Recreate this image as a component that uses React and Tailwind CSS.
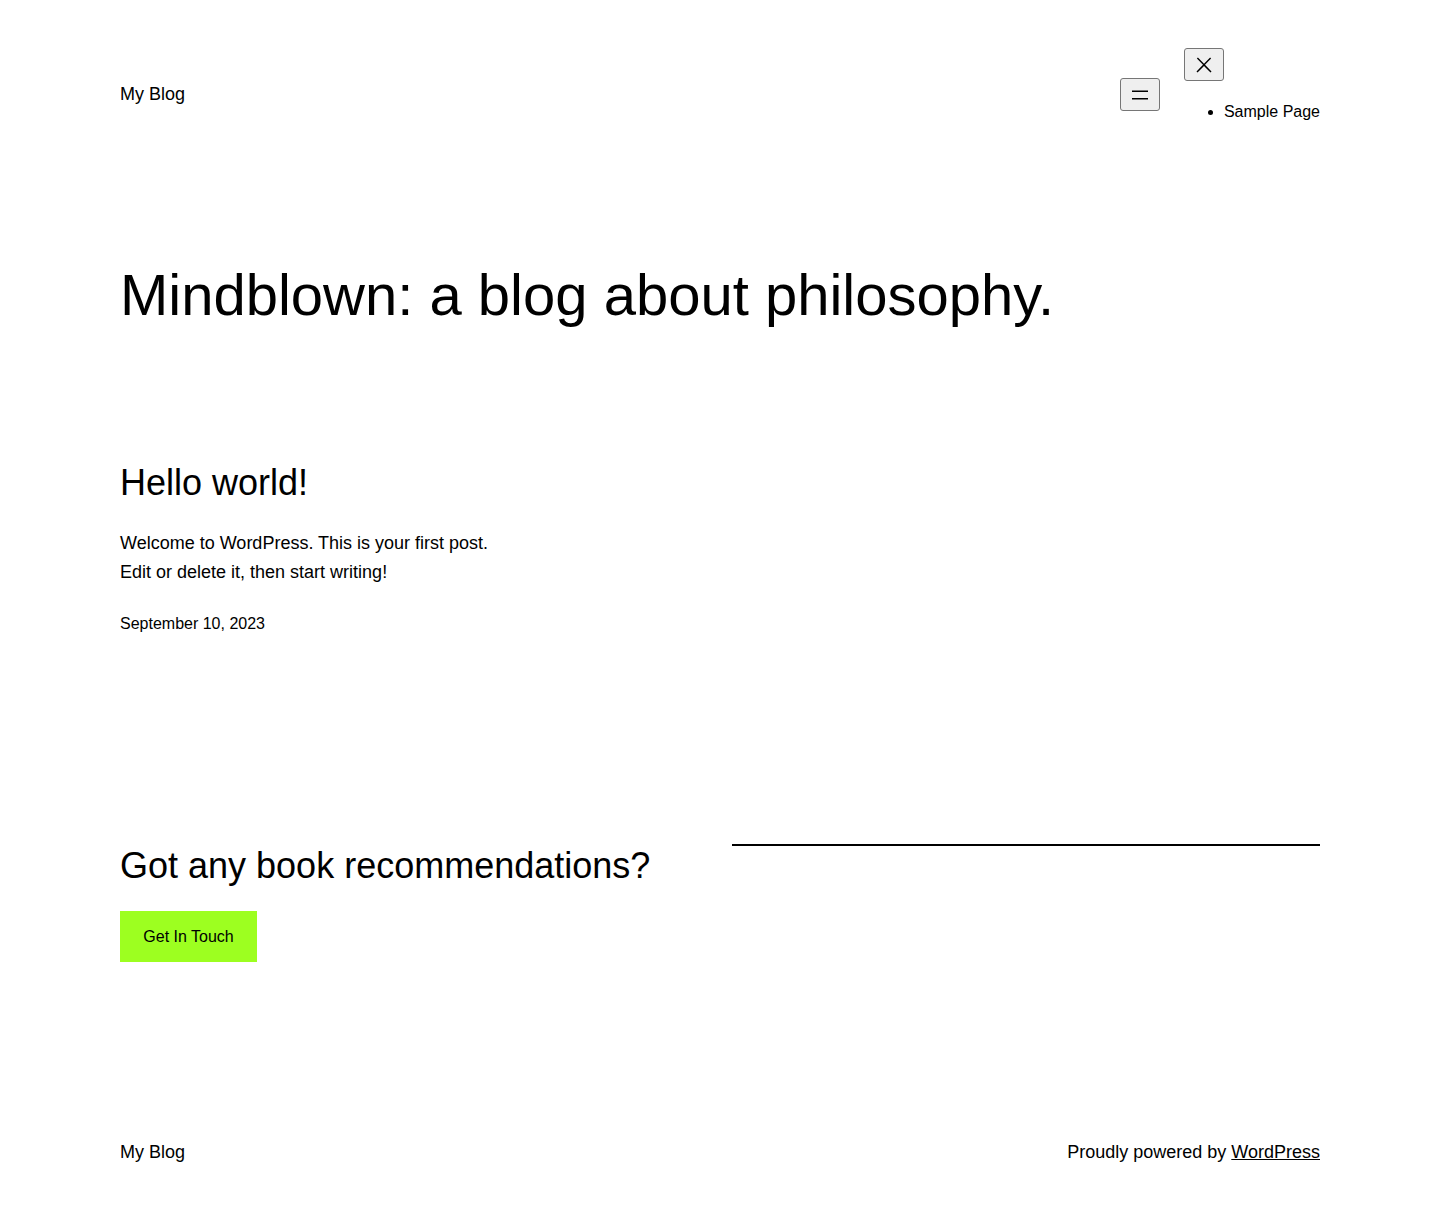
import React from "react";

const font = { fontFamily: '"Liberation Sans", Arial, sans-serif' };

export default function App() {
  return (
    <div className="min-h-[1215px] bg-white text-black flex flex-col px-[120px]" style={font}>
      {/* HEADER */}
      <header className="flex items-start justify-between pt-[48px] h-[170px]">
        <a className="text-[18px] leading-[27px] mt-[33px]">My Blog</a>
        <div className="flex items-start">
          <button className="mt-[30px] w-[40px] h-[33px] flex items-center justify-center bg-[#efefef] border border-[#767676] rounded-[3px]">
            <svg width="24" height="24" viewBox="0 0 24 24">
              <path d="M4 7.5h16V9H4zM4 15h16v1.5H4z" fill="#000" />
            </svg>
          </button>
          <div className="ml-[24px] flex flex-col items-start">
            <button className="w-[40px] h-[33px] flex items-center justify-center bg-[#efefef] border border-[#767676] rounded-[3px]">
              <svg width="24" height="24" viewBox="0 0 24 24">
                <path
                  d="M13 11.8l6.1-6.3-1-1-6.1 6.2-6.1-6.2-1 1 6.1 6.3-6.5 6.7 1 1 6.5-6.6 6.5 6.6 1-1z"
                  fill="#000"
                />
              </svg>
            </button>
            <ul className="list-disc pl-[40px] mt-[21px] text-[16px] leading-[20px]">
              <li>Sample Page</li>
            </ul>
          </div>
        </div>
      </header>

      {/* HERO */}
      <h1 className="text-[58px] leading-[72px] mt-[89px]">
        Mindblown: a blog about philosophy.
      </h1>

      {/* POST */}
      <article className="mt-[130px]">
        <h2 className="text-[36px] leading-[43px]">Hello world!</h2>
        <p className="text-[18px] leading-[29px] mt-[25px]">
          Welcome to WordPress. This is your first post.
          <br />
          Edit or delete it, then start writing!
        </p>
        <p className="text-[16px] leading-[20px] mt-[27px]">September 10, 2023</p>
      </article>

      {/* CTA */}
      <section className="mt-[210px] flex items-start justify-between">
        <div>
          <h2 className="text-[36px] leading-[43px]">Got any book recommendations?</h2>
          <a className="mt-[24px] inline-flex items-center justify-center w-[137px] h-[51px] bg-[#9dff20] text-[16px]">
            Get In Touch
          </a>
        </div>
        <hr className="w-[588px] border-0 border-t-2 border-black mt-[0px]" />
      </section>

      {/* FOOTER */}
      <footer className="mt-auto pb-[49px] flex items-center justify-between text-[18px] leading-[27px]">
        <span>My Blog</span>
        <span>
          Proudly powered by <a className="underline">WordPress</a>
        </span>
      </footer>
    </div>
  );
}
